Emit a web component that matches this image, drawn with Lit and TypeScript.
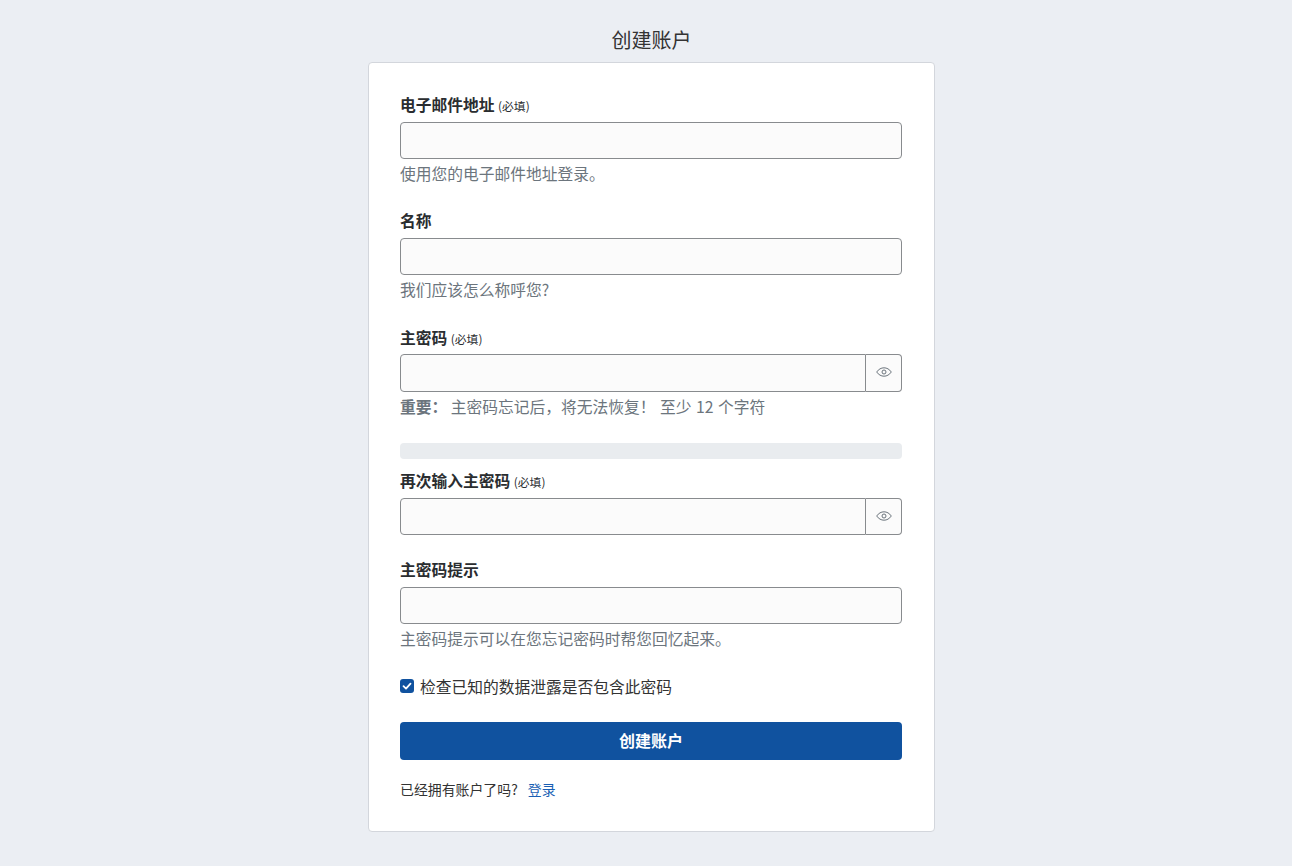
import { LitElement, html, css } from "lit";
import { customElement } from "lit/decorators.js";

const COLON = "\uFF1A";
const COMMA = "\uFF0C";
const BANG = "\uFF01";

const eye = html`<svg class="eye" viewBox="0 0 16 10" width="16" height="10" fill="none" stroke="#6c757d" stroke-width="1"><path d="M0.7 5C2.6 2.2 5.2 0.8 8 0.8S13.4 2.2 15.3 5C13.4 7.8 10.8 9.2 8 9.2S2.6 7.8 0.7 5Z"/><circle cx="8" cy="5" r="2"/></svg>`;

@customElement("app-root")
export class AppRoot extends LitElement {
  static styles = css`
    :host {
      display: block;
      min-height: 866px;
      background: #ebeef3;
      font-family: "Noto Sans CJK SC", "Liberation Sans", sans-serif;
      color: #333;
      font-size: 15.75px;
      line-height: 24px;
    }
    .page { display: flex; flex-direction: column; align-items: center; padding: 26px 0 0 11px; }
    h1 { margin: 0 0 8px; font-size: 20px; line-height: 28px; font-weight: 400; color: #333; }
    .card {
      width: 567px; box-sizing: border-box; height: 770px;
      background: #fff; border: 1px solid #d3d6dc; border-radius: 4px;
      padding: 30px 32px 0 31px;
      display: flex; flex-direction: column;
    }
    .field { display: flex; flex-direction: column; margin-bottom: 23px; }
    .field.compact { margin-bottom: 24px; }
    label { font-weight: 700; margin-bottom: 5px; height: 24px; color: #2a2d30; }
    label.tight { margin-bottom: 4px; }
    .req { font-size: 11.8px; font-weight: 400; }
    .input {
      height: 37px; box-sizing: border-box; background: #fbfbfb;
      border: 1px solid #888b8e; border-radius: 4px;
    }
    .tall { height: 38px; }
    .group { display: flex; }
    .group .input { flex: 1; border-radius: 4px 0 0 4px; }
    .toggle {
      width: 36px; box-sizing: border-box; background: #fbfbfb;
      border: 1px solid #888b8e; border-left: 0; border-radius: 0 4px 4px 0;
      display: flex; align-items: center; justify-content: center; padding-bottom: 2px;
    }
    .hint { color: #6c757d; margin-top: 3px; height: 24px; white-space: pre; }
    .hint b { font-weight: 700; }
    .hint .gap { margin-left: 1px; word-spacing: 1px; }
    .bar { height: 16px; background: #e9ecef; border-radius: 4px; margin-bottom: 10px; }
    .check { display: flex; align-items: center; gap: 6px; height: 24px; margin-bottom: 23px; }
    .check-text { padding-top: 2px; }
    .box {
      width: 14px; height: 14px; border-radius: 3px; background: #10529f;
      display: flex; align-items: center; justify-content: center;
    }
    .btn {
      height: 38px; background: #10529f; color: #fff; border-radius: 4px;
      display: flex; align-items: center; justify-content: center; font-weight: 700;
      font-size: 16px; padding-bottom: 2px;
      box-sizing: border-box; margin: 1px 0 17px;
    }
    .foot { font-size: 13.9px; line-height: 24px; }
    .foot a { color: #1a5fb4; margin-left: 7px; text-decoration: none; }
  `;

  render() {
    return html`<div class="page">
      <h1>创建账户</h1>
      <div class="card">
        <div class="field">
          <label>电子邮件地址 <span class="req">(必填)</span></label>
          <div class="input"></div>
          <div class="hint">使用您的电子邮件地址登录。</div>
        </div>
        <div class="field compact">
          <label>名称</label>
          <div class="input"></div>
          <div class="hint">我们应该怎么称呼您?</div>
        </div>
        <div class="field compact">
          <label class="tight">主密码 <span class="req">(必填)</span></label>
          <div class="group"><div class="input tall"></div><div class="toggle">${eye}</div></div>
          <div class="hint"><b>重要${COLON}</b> 主密码忘记后${COMMA}将无法恢复${BANG} <span class="gap">至少 12 个字符</span></div>
        </div>
        <div class="bar"></div>
        <div class="field">
          <label>再次输入主密码 <span class="req">(必填)</span></label>
          <div class="group"><div class="input"></div><div class="toggle">${eye}</div></div>
        </div>
        <div class="field">
          <label>主密码提示</label>
          <div class="input"></div>
          <div class="hint">主密码提示可以在您忘记密码时帮您回忆起来。</div>
        </div>
        <div class="check">
          <span class="box"><svg width="10" height="10" viewBox="0 0 10 10" fill="none" stroke="#fff" stroke-width="1.8" stroke-linecap="round" stroke-linejoin="round"><path d="M1.5 5.2 4 7.6 8.5 2.6"/></svg></span>
          <span class="check-text">检查已知的数据泄露是否包含此密码</span>
        </div>
        <div class="btn">创建账户</div>
        <div class="foot">已经拥有账户了吗? <a href="#">登录</a></div>
      </div>
    </div>`;
  }
}
